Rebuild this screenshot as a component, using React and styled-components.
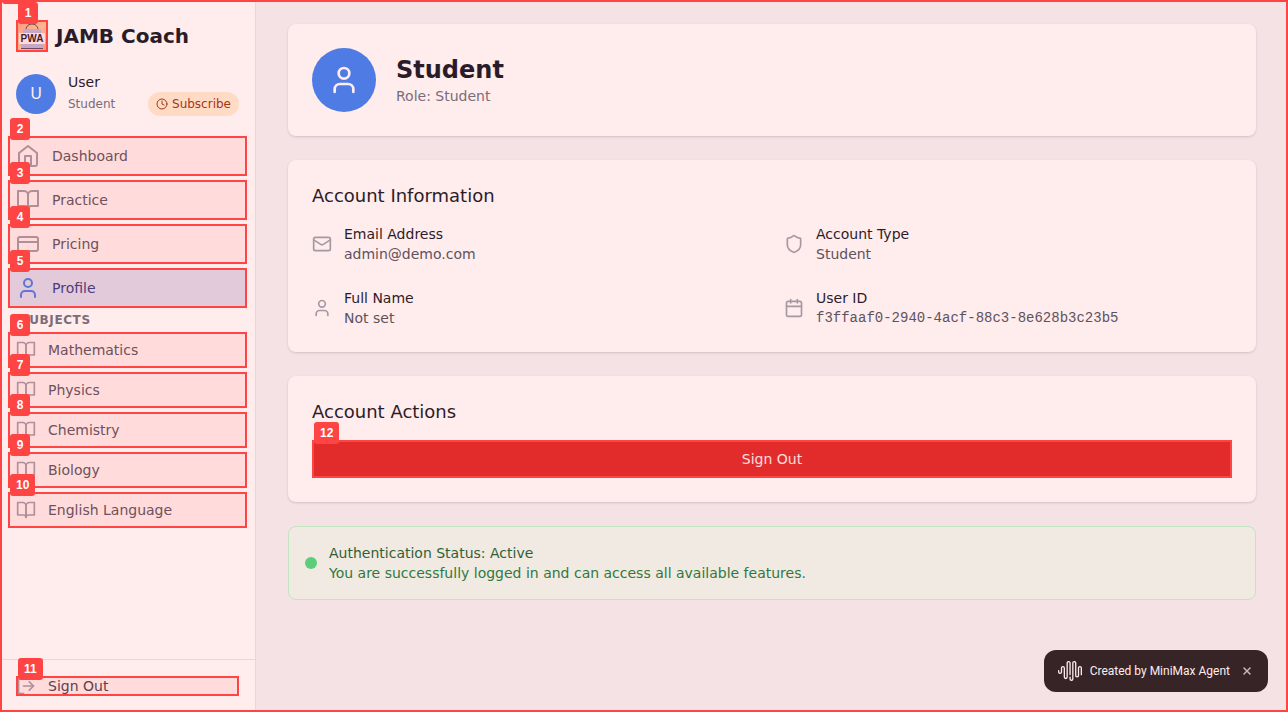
import React from "react";
import styled, { createGlobalStyle, css } from "styled-components";
import { Calendar, Clock, CreditCard, LogOut, Mail, Shield, User, X } from "lucide-react";

const GlobalStyle = createGlobalStyle`
  *, *::before, *::after { box-sizing: border-box; }
  body {
    margin: 0;
    background: #f3f4f6;
    color: #111827;
    font-family: "DejaVu Sans", sans-serif;
    font-size: 14px;
    line-height: 20px;
  }
  h1, h2, h3, p, dl, dd, dt, ul { margin: 0; padding: 0; }
  ul { list-style: none; }
  a { color: inherit; text-decoration: none; }
  button { font: inherit; border: 0; cursor: pointer; }
  svg { display: block; flex-shrink: 0; }
`;

/* Numbered highlight over an interactive element */
const Highlight = styled.span`
  position: absolute;
  inset: 0;
  z-index: ${(p) => (p.$page ? 1 : 2)};
  border: 2px solid #ff4444;
  background: rgba(255, 68, 68, 0.1);
  pointer-events: none;
`;

const Tag = styled.span`
  position: absolute;
  top: -20px;
  left: 0;
  min-width: 20px;
  height: 22px;
  padding: 0 6px;
  border-radius: 3px;
  background: #ff4444;
  color: #fff;
  font: bold 12px/22px "Liberation Sans", sans-serif;
  text-align: center;
`;

function Mark({ n, page }) {
  return (
    <Highlight $page={page} aria-hidden="true">
      <Tag>{n}</Tag>
    </Highlight>
  );
}

const Page = styled.div`
  position: relative;
  display: flex;
  min-height: 100vh;
`;

const Sidebar = styled.aside`
  display: flex;
  flex-direction: column;
  flex: 0 0 256px;
  background: #fff;
  border-right: 1px solid #e5e7eb;
`;

const Brand = styled.div`
  display: flex;
  align-items: center;
  gap: 8px;
  padding: 20px 16px;
`;

const LogoBox = styled.span`
  position: relative;
  width: 32px;
  height: 32px;
`;

const BrandName = styled.span`
  font-size: 20px;
  line-height: 28px;
  font-weight: 700;
`;

const UserPanel = styled.div`
  display: flex;
  align-items: center;
  gap: 12px;
  padding: 0 16px 20px;
`;

const Avatar = styled.span`
  display: flex;
  align-items: center;
  justify-content: center;
  flex-shrink: 0;
  width: ${(p) => p.$size}px;
  height: ${(p) => p.$size}px;
  border-radius: 50%;
  background: #3b82f6;
  color: #fff;
  font-size: 16px;
`;

const UserText = styled.div`
  flex: 1;
`;

const PlanRow = styled.div`
  display: flex;
  align-items: center;
  justify-content: space-between;
  color: #6b7280;
  font-size: 12px;
  line-height: 16px;
`;

const SubscribeLink = styled.a`
  display: flex;
  align-items: center;
  gap: 4px;
  padding: 4px 8px;
  border-radius: 12px;
  background: #ffedd5;
  && { color: #9a3412; }
`;

const NavList = styled.ul`
  display: flex;
  flex-direction: column;
  gap: 4px;
  padding: 0 8px;
`;

const NavLink = styled.a`
  position: relative;
  display: flex;
  align-items: center;
  gap: 12px;
  padding: 8px;
  border-radius: 6px;
  && { color: #4b5563; }
  svg { color: #9ca3af; }
  ${(p) =>
    p.$active &&
    css`
      background: #dbeafe;
      && { color: #1e3a8a; }
      svg { color: #3b82f6; }
    `}
`;

const SectionLabel = styled.h3`
  padding: 4px 20px;
  color: #6b7280;
  font-size: 12px;
  line-height: 16px;
  font-weight: 700;
  letter-spacing: 0.05em;
  text-transform: uppercase;
`;

const SidebarFooter = styled.div`
  margin-top: auto;
  padding: 16px;
  border-top: 1px solid #e5e7eb;
`;

const SignOutLink = styled.button`
  position: relative;
  display: flex;
  align-items: center;
  gap: 12px;
  width: 100%;
  padding: 0;
  background: none;
  color: #374151;
  svg { color: #9ca3af; }
`;

const Main = styled.main`
  display: flex;
  flex: 1;
  min-width: 0;
  flex-direction: column;
  gap: 24px;
  padding: 24px 32px;
`;

const Card = styled.section`
  padding: 24px;
  border-radius: 8px;
  background: #fff;
  box-shadow: 0 1px 3px rgba(0, 0, 0, 0.1), 0 1px 2px rgba(0, 0, 0, 0.06);
`;

const ProfileHeader = styled.div`
  display: flex;
  align-items: center;
  gap: 20px;
`;

const ProfileName = styled.h1`
  font-size: 24px;
  line-height: 32px;
`;

const Role = styled.p`
  color: #6b7280;
`;

const CardTitle = styled.h2`
  margin-bottom: 16px;
  font-size: 18px;
  line-height: 24px;
  font-weight: 500;
`;

const InfoGrid = styled.dl`
  display: grid;
  grid-template-columns: 1fr 1fr;
  gap: 24px;
`;

const InfoItem = styled.div`
  display: flex;
  align-items: center;
  gap: 12px;
  svg { color: #9ca3af; }
`;

const InfoValue = styled.dd`
  color: #4b5563;
  ${(p) => p.$mono && css`font-family: "Liberation Mono", monospace;`}
`;

const DangerButton = styled.button`
  position: relative;
  width: 100%;
  padding: 9px 16px;
  border-radius: 6px;
  background: #dc2626;
  color: #fff;
`;

const Status = styled.section`
  display: flex;
  align-items: center;
  gap: 12px;
  padding: 16px;
  border: 1px solid #bbf7d0;
  border-radius: 8px;
  background: #f0fdf4;
  color: #15803d;
  h3 {
    color: #166534;
    font: inherit;
  }
`;

const StatusDot = styled.span`
  width: 12px;
  height: 12px;
  border-radius: 50%;
  background: #4ade80;
`;

const Toast = styled.div`
  position: fixed;
  right: 20px;
  bottom: 20px;
  display: flex;
  align-items: center;
  gap: 8px;
  height: 42px;
  padding: 0 12px 0 14px;
  border-radius: 12px;
  background: #212123;
  color: #fff;
  font: 400 12px/18px Roboto, sans-serif;
`;

const CloseButton = styled.button`
  display: flex;
  align-items: center;
  justify-content: center;
  width: 18px;
  height: 18px;
  padding: 0;
  background: none;
  color: #c4c4c6;
`;

function Stroke({ size, children }) {
  return (
    <svg width={size} height={size} viewBox="0 0 24 24" fill="none" stroke="currentColor"
      strokeWidth="2" strokeLinecap="round" strokeLinejoin="round" aria-hidden="true">
      {children}
    </svg>
  );
}

function HomeIcon({ size }) {
  return (
    <Stroke size={size}>
      <path d="m3 9 9-7 9 7v11a2 2 0 0 1-2 2H5a2 2 0 0 1-2-2z" />
      <polyline points="9 22 9 12 15 12 15 22" />
    </Stroke>
  );
}

function BookIcon({ size }) {
  return (
    <Stroke size={size}>
      <path d="M2 3h6a4 4 0 0 1 4 4v14a3 3 0 0 0-3-3H2z" />
      <path d="M22 3h-6a4 4 0 0 0-4 4v14a3 3 0 0 1 3-3h7z" />
    </Stroke>
  );
}

function AppLogo() {
  return (
    <svg width="32" height="32" viewBox="0 0 32 32" role="img" aria-label="PWA">
      <defs>
        <linearGradient id="logo-bg" x1="0" y1="0" x2="1" y2="1">
          <stop offset="0" stopColor="#ffa98c" />
          <stop offset="0.5" stopColor="#ffd2a0" />
          <stop offset="1" stopColor="#ffa478" />
        </linearGradient>
      </defs>
      <rect width="32" height="32" fill="url(#logo-bg)" />
      <path d="M10 10C10 6 13 4 16 4s6 2 6 6" fill="none" stroke="#3a3440" strokeWidth="1" />
      <path d="M7 9h18v4l2 11v4H5v-4l2-11z" fill="#b9bfe4" />
      <path d="M5 28.500h22" stroke="#4d4a68" strokeWidth="1" />
      <rect x="3" y="13" width="26" height="11" fill="#fff" />
      <text x="16" y="22" textAnchor="middle" fontFamily="Liberation Sans, sans-serif"
        fontWeight="700" fontSize="10" fill="#171326">PWA</text>
    </svg>
  );
}

function WaveLogo() {
  return (
    <svg width="24" height="24" viewBox="0 0 24 24" fill="currentColor" aria-hidden="true">
      <path d="M16.278 2c1.156 0 2.093.927 2.093 2.07v12.501a.74.74 0 00.744.709.74.74 0 00.743-.709V9.099a2.06 2.06 0 012.071-2.049A2.06 2.06 0 0124 9.1v6.561a.649.649 0 01-.652.645.649.649 0 01-.653-.645V9.1a.762.762 0 00-.766-.758.762.762 0 00-.766.758v7.472a2.037 2.037 0 01-2.048 2.026 2.037 2.037 0 01-2.048-2.026v-12.5a.785.785 0 00-.788-.753.785.785 0 00-.789.752l-.001 15.904A2.037 2.037 0 0113.441 22a2.037 2.037 0 01-2.048-2.026V18.04c0-.356.292-.645.652-.645.36 0 .652.289.652.645v1.934c0 .263.142.506.372.638.23.131.514.131.744 0a.734.734 0 00.372-.638V4.07c0-1.143.937-2.07 2.093-2.07zm-5.674 0c1.156 0 2.093.927 2.093 2.07v11.523a.648.648 0 01-.652.645.648.648 0 01-.652-.645V4.07a.785.785 0 00-.789-.78.785.785 0 00-.789.78v14.013a2.06 2.06 0 01-2.07 2.048 2.06 2.06 0 01-2.071-2.048V9.1a.762.762 0 00-.766-.758.762.762 0 00-.766.758v3.8a2.06 2.06 0 01-2.071 2.049A2.06 2.06 0 010 12.9v-1.378c0-.357.292-.646.652-.646.36 0 .653.29.653.646V12.9c0 .418.343.757.766.757s.766-.339.766-.757V9.099a2.06 2.06 0 012.07-2.048 2.06 2.06 0 012.071 2.048v8.984c0 .419.343.758.767.758.423 0 .766-.339.766-.758V4.07c0-1.143.937-2.07 2.093-2.07z" />
    </svg>
  );
}

const pages = [
  { label: "Dashboard", Icon: HomeIcon },
  { label: "Practice", Icon: BookIcon },
  { label: "Pricing", Icon: CreditCard },
  { label: "Profile", Icon: User, active: true },
];

const subjects = ["Mathematics", "Physics", "Chemistry", "Biology", "English Language"];

const account = [
  { label: "Email Address", value: "admin@demo.com", Icon: Mail },
  { label: "Account Type", value: "Student", Icon: Shield },
  { label: "Full Name", value: "Not set", Icon: User },
  { label: "User ID", value: "f3ffaaf0-2940-4acf-88c3-8e628b3c23b5", Icon: Calendar, mono: true },
];

export default function App() {
  return (
    <>
      <GlobalStyle />
      <Page>
        <Sidebar>
          <Brand>
            <LogoBox>
              <AppLogo />
              <Mark n={1} />
            </LogoBox>
            <BrandName>JAMB Coach</BrandName>
          </Brand>
          <UserPanel>
            <Avatar $size={40}>U</Avatar>
            <UserText>
              <p>User</p>
              <PlanRow>
                <span>Student</span>
                <SubscribeLink href="#pricing">
                  <Clock size={12} />
                  Subscribe
                </SubscribeLink>
              </PlanRow>
            </UserText>
          </UserPanel>
          <nav>
            <NavList>
              {pages.map(({ label, Icon, active }, i) => (
                <li key={label}>
                  <NavLink href={`#${label.toLowerCase()}`} $active={active}>
                    <Icon size={24} />
                    {label}
                    <Mark n={i + 2} />
                  </NavLink>
                </li>
              ))}
            </NavList>
            <SectionLabel>Subjects</SectionLabel>
            <NavList>
              {subjects.map((label, i) => (
                <li key={label}>
                  <NavLink href="#subject">
                    <BookIcon size={20} />
                    {label}
                    <Mark n={i + 6} />
                  </NavLink>
                </li>
              ))}
            </NavList>
          </nav>
          <SidebarFooter>
            <SignOutLink type="button">
              <LogOut size={20} />
              Sign Out
              <Mark n={11} />
            </SignOutLink>
          </SidebarFooter>
        </Sidebar>

        <Main>
          <Card>
            <ProfileHeader>
              <Avatar $size={64}>
                <User size={32} />
              </Avatar>
              <div>
                <ProfileName>Student</ProfileName>
                <Role>Role: Student</Role>
              </div>
            </ProfileHeader>
          </Card>

          <Card>
            <CardTitle>Account Information</CardTitle>
            <InfoGrid>
              {account.map(({ label, value, Icon, mono }) => (
                <InfoItem key={label}>
                  <Icon size={20} />
                  <div>
                    <dt>{label}</dt>
                    <InfoValue $mono={mono}>{value}</InfoValue>
                  </div>
                </InfoItem>
              ))}
            </InfoGrid>
          </Card>

          <Card>
            <CardTitle>Account Actions</CardTitle>
            <DangerButton type="button">
              Sign Out
              <Mark n={12} />
            </DangerButton>
          </Card>

          <Status>
            <StatusDot />
            <div>
              <h3>Authentication Status: Active</h3>
              <p>You are successfully logged in and can access all available features.</p>
            </div>
          </Status>
        </Main>

        <Toast>
          <WaveLogo />
          <span>Created by MiniMax Agent</span>
          <CloseButton type="button" aria-label="Close">
            <X size={12} strokeWidth={3} />
          </CloseButton>
        </Toast>
        <Mark page />
      </Page>
    </>
  );
}
